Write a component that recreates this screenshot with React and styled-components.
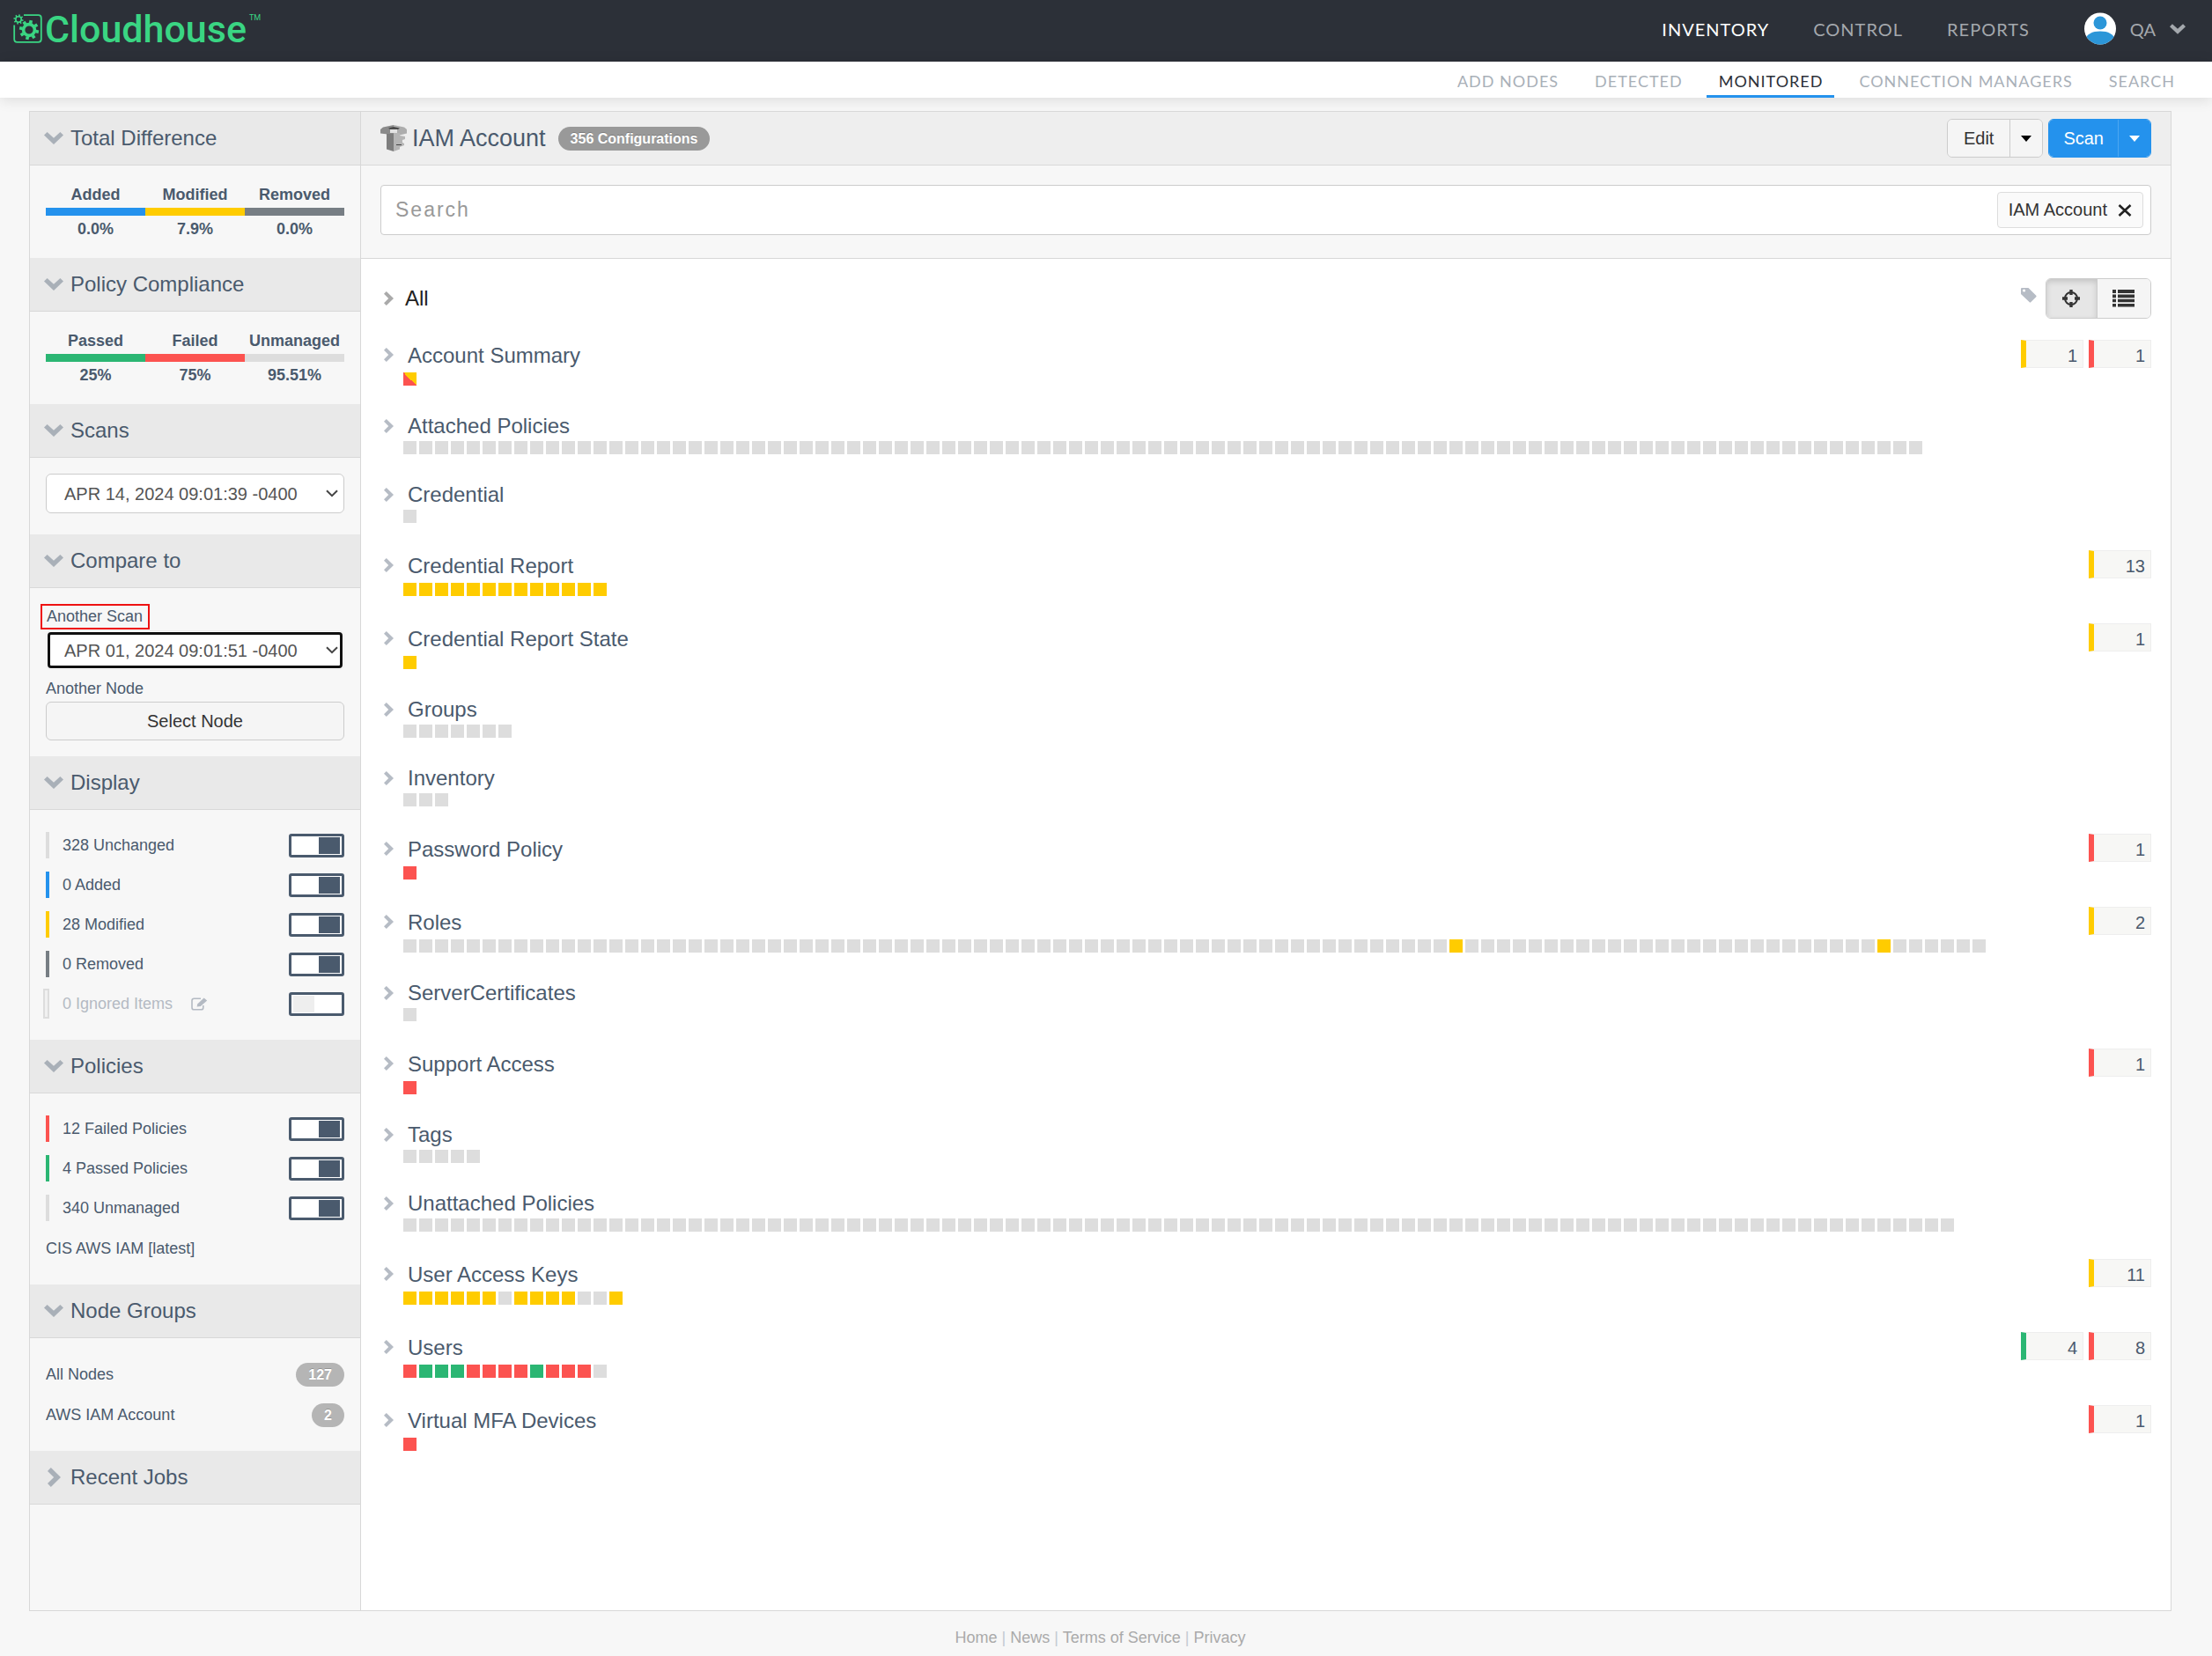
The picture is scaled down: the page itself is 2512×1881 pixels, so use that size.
import React, { useState } from 'react';
import styled, { createGlobalStyle } from 'styled-components';

const colors = {
  none: '#dddddd',
  added: '#2492ed',
  modified: '#ffcc00',
  removed: '#777e84',
  passed: '#2bb673',
  failed: '#fc5350',
  slate: '#4a5a6d',
  border: '#d8d8d8',
};

const fill = (count, kind) => Array(count).fill(kind);

const roles = fill(100, 'none');
roles[66] = 'modified';
roles[93] = 'modified';

const groups = [
  { name: 'Account Summary', items: ['both'], counts: [['modified', 1], ['failed', 1]] },
  { name: 'Attached Policies', items: fill(96, 'none') },
  { name: 'Credential', items: fill(1, 'none') },
  { name: 'Credential Report', items: fill(13, 'modified'), counts: [['modified', 13]] },
  { name: 'Credential Report State', items: fill(1, 'modified'), counts: [['modified', 1]] },
  { name: 'Groups', items: fill(7, 'none') },
  { name: 'Inventory', items: fill(3, 'none') },
  { name: 'Password Policy', items: fill(1, 'failed'), counts: [['failed', 1]] },
  { name: 'Roles', items: roles, counts: [['modified', 2]] },
  { name: 'ServerCertificates', items: fill(1, 'none') },
  { name: 'Support Access', items: fill(1, 'failed'), counts: [['failed', 1]] },
  { name: 'Tags', items: fill(5, 'none') },
  { name: 'Unattached Policies', items: fill(98, 'none') },
  {
    name: 'User Access Keys',
    items: [...fill(6, 'modified'), 'none', ...fill(4, 'modified'), 'none', 'none', 'modified'],
    counts: [['modified', 11]],
  },
  {
    name: 'Users',
    items: ['failed', ...fill(3, 'passed'), ...fill(4, 'failed'), 'passed', ...fill(3, 'failed'), 'none'],
    counts: [['passed', 4], ['failed', 8]],
  },
  { name: 'Virtual MFA Devices', items: fill(1, 'failed'), counts: [['failed', 1]] },
];

const ChevronDown = ({ width = 22, height = 14 }) => (
  <svg width={width} height={height} viewBox='0 0 22 14' fill='currentColor' aria-hidden='true'>
    <path d='M0 3.6 3.6 0 11 6.8 18.4 0 22 3.6 11 14Z' />
  </svg>
);

const ChevronRight = ({ width = 11, height = 16 }) => (
  <svg width={width} height={height} viewBox='0 0 11 16' fill='currentColor' aria-hidden='true'>
    <path d='M0 2.8 2.8 0 11 8 2.8 16 0 13.2 5.2 8Z' />
  </svg>
);

const SelectArrow = () => (
  <svg width='14' height='9' viewBox='0 0 14 9' fill='none' stroke='#444' strokeWidth='2' aria-hidden='true'>
    <path d='M1 1.2 7 7.2 13 1.2' />
  </svg>
);

const Caret = () => (
  <svg width='12' height='7' viewBox='0 0 12 7' fill='currentColor' aria-hidden='true'>
    <path d='M0 0H12L6 7Z' />
  </svg>
);

const CloseIcon = () => (
  <svg width='16' height='14' viewBox='0 0 16 14' fill='none' stroke='#222' strokeWidth='2.6' aria-hidden='true'>
    <path d='M1.5 1 14.5 13M14.5 1 1.5 13' />
  </svg>
);

const TagIcon = () => (
  <svg width='18' height='18' viewBox='0 0 18 18' fill='#b6bcc5' aria-hidden='true'>
    <path fillRule='evenodd' d='M1 1H8.5L17.3 9.8Q18 10.5 17.3 11.2L11.2 17.3Q10.5 18 9.8 17.3L0 8V2Q0 1 1 1ZM3.6 2.4A1.6 1.6 0 1 0 3.6 5.6 1.6 1.6 0 0 0 3.6 2.4Z' />
  </svg>
);

const TargetIcon = () => (
  <svg width='20' height='20' viewBox='0 0 20 20' fill='none' stroke='#333' aria-hidden='true'>
    <circle cx='10' cy='10' r='7' strokeWidth='2' />
    <path d='M10 0V6M10 14V20M0 10H6M14 10H20' strokeWidth='3.4' />
  </svg>
);

const ListIcon = () => (
  <svg width='25' height='20' viewBox='0 0 25 20' fill='#333' aria-hidden='true'>
    <path d='M0 0H4V4H0ZM6 0H25V4H6ZM0 5.5H4V9.2H0ZM6 5.5H25V9.2H6ZM0 10.8H4V14.2H0ZM6 10.8H25V14.2H6ZM0 16H4V19.5H0ZM6 16H25V19.5H6Z' />
  </svg>
);

const EditIcon = () => (
  <svg width='19' height='15' viewBox='0 0 19 15' fill='none' stroke='#b4bac3' aria-hidden='true'>
    <path d='M11 1.3H3.4Q1 1.3 1 3.6V11.4Q1 13.8 3.4 13.8H11.4Q13.8 13.8 13.8 11.4V9' strokeWidth='1.6' />
    <path d='M6.6 10.6 7.4 7.2 14.6 .4 18.2 3.6 10.8 10Z' fill='#b4bac3' stroke='none' />
  </svg>
);

const Avatar = () => (
  <svg width='36' height='37' viewBox='0 0 36 37' aria-hidden='true'>
    <clipPath id='face'><circle cx='18' cy='18.5' r='18' /></clipPath>
    <circle cx='18' cy='18.5' r='18' fill='#fff' />
    <g clipPath='url(#face)' fill='#2c96d8'>
      <ellipse cx='18' cy='12' rx='7.5' ry='7.5' />
      <path d='M1 31Q4 21.5 18 21.5T35 31L33 38H3Z' />
    </g>
  </svg>
);

const teeth = [0, 45, 90, 135, 180, 225, 270, 315];

const Gear = ({ x, y, r, width, tooth }) => (
  <g stroke='#3ad583' fill='none' strokeWidth={width}>
    <circle cx={x} cy={y} r={r} />
    {teeth.map((a) => (
      <path key={a} d={`M${x} ${y - r - width / 2 + 0.5}v${-tooth}`} transform={`rotate(${a + 12} ${x} ${y})`} />
    ))}
  </g>
);

const LogoMark = () => (
  <svg width='33' height='33' viewBox='0 0 33 33' aria-hidden='true'>
    <path d='M12 1.2H28.5Q31.8 1.2 31.8 4.5V28.5Q31.8 31.8 28.5 31.8H4.5Q1.2 31.8 1.2 28.5V12.5' fill='none' stroke='#3ad583' strokeWidth='1.8' />
    <Gear x={6} y={6} r={3.2} width={1.6} tooth={2.1} />
    <Gear x={18} y={18} r={6.4} width={3.6} tooth={3.4} />
  </svg>
);

const AccountIcon = () => (
  <svg width='30' height='30' viewBox='0 0 30 30' aria-hidden='true'>
    <path d='M0 5 3 2.5 15 0V12H8V10.5L0 9.5Z' fill='#8a8a8a' />
    <path d='M15 0 27 2.5 30 5V9.5L22 11.5H15Z' fill='#adadad' />
    <path d='M7 10H15V30L7 27.5Z' fill='#7d7d7d' />
    <path d='M15 9H22V12L28 13V16L25 17V20L27 21V23L22 25V27.5L15 30Z' fill='#b5b5b5' />
    <path d='M9 3.5 15 2 22 3.5 20 5H11Z' fill='#4a4a4a' />
    <path d='M11 5H19V9H11Z' fill='#e2e2e2' />
    <path d='M18 22H24V23H18Z' fill='#444' />
  </svg>
);

const Panel = ({ title, closed, children }) => (
  <section>
    <PanelTitle type='button' aria-expanded={!closed}>
      <span className='icon'>{closed ? <ChevronRight width={15} height={22} /> : <ChevronDown />}</span>
      {title}
    </PanelTitle>
    {children}
  </section>
);

const Stats = ({ data }) => (
  <StatGrid>
    {data.map(([label, value, color]) => (
      <Stat key={label} $color={color}>
        <dt>{label}</dt>
        <dd>{value}</dd>
      </Stat>
    ))}
  </StatGrid>
);

const Filter = ({ label, color, off }) => {
  const [on, setOn] = useState(!off);
  return (
    <FilterRow $off={off}>
      <Marker $color={color} $hollow={off} />
      <span>{label}</span>
      {off && <EditIcon />}
      <Switch type='checkbox' aria-label={label} checked={on} onChange={() => setOn(!on)} />
    </FilterRow>
  );
};

const Group = ({ name, items, counts = [] }) => (
  <GroupRow>
    <GroupHead $tall={counts.length > 0}>
      <GroupName type='button'>
        <ChevronRight />
        {name}
      </GroupName>
      {counts.map(([kind, count]) => (
        <Count key={kind} $color={colors[kind]}>{count}</Count>
      ))}
    </GroupHead>
    <Squares>
      {items.map((kind, i) => <Square key={i} $kind={kind} />)}
    </Squares>
  </GroupRow>
);

const App = () => {
  return (
    <>
      <GlobalStyle />
      <Page>
        <TopBar>
          <Logo href='#'>
            <LogoMark />
            <span>Cloudhouse</span>
            <sup>TM</sup>
          </Logo>
          <MainNav>
            <a href='#' className='active'>INVENTORY</a>
            <a href='#'>CONTROL</a>
            <a href='#'>REPORTS</a>
          </MainNav>
          <UserMenu type='button'>
            <Avatar />
            QA
            <ChevronDown width={18} height={12} />
          </UserMenu>
        </TopBar>
        <SubNav>
          <a href='#'>ADD NODES</a>
          <a href='#'>DETECTED</a>
          <a href='#' className='active'>MONITORED</a>
          <a href='#'>CONNECTION MANAGERS</a>
          <a href='#'>SEARCH</a>
        </SubNav>

        <Container>
          <Sidebar>
            <Panel title='Total Difference'>
              <Stats data={[['Added', '0.0%', colors.added], ['Modified', '7.9%', colors.modified], ['Removed', '0.0%', colors.removed]]} />
            </Panel>
            <Panel title='Policy Compliance'>
              <Stats data={[['Passed', '25%', colors.passed], ['Failed', '75%', colors.failed], ['Unmanaged', '95.51%', colors.none]]} />
            </Panel>
            <Panel title='Scans'>
              <ScanBody>
                <SelectBox>
                  <select aria-label='Scans'>
                    <option>APR 14, 2024 09:01:39 -0400</option>
                  </select>
                  <SelectArrow />
                </SelectBox>
              </ScanBody>
            </Panel>
            <Panel title='Compare to'>
              <CompareBody>
                <MarkedLabel htmlFor='another-scan'>Another Scan</MarkedLabel>
                <SelectBox $focused>
                  <select id='another-scan'>
                    <option>APR 01, 2024 09:01:51 -0400</option>
                  </select>
                  <SelectArrow />
                </SelectBox>
                <NodeLabel htmlFor='another-node'>Another Node</NodeLabel>
                <SelectNode id='another-node' type='button'>Select Node</SelectNode>
              </CompareBody>
            </Panel>
            <Panel title='Display'>
              <List>
                <Filter label='328 Unchanged' color={colors.none} />
                <Filter label='0 Added' color={colors.added} />
                <Filter label='28 Modified' color={colors.modified} />
                <Filter label='0 Removed' color={colors.removed} />
                <Filter label='0 Ignored Items' color={colors.none} off />
              </List>
            </Panel>
            <Panel title='Policies'>
              <List>
                <Filter label='12 Failed Policies' color={colors.failed} />
                <Filter label='4 Passed Policies' color={colors.passed} />
                <Filter label='340 Unmanaged' color={colors.none} />
                <ListLink href='#'>CIS AWS IAM [latest]</ListLink>
              </List>
            </Panel>
            <Panel title='Node Groups'>
              <List>
                <ListLink href='#'>All Nodes <Pill>127</Pill></ListLink>
                <ListLink href='#'>AWS IAM Account <Pill>2</Pill></ListLink>
              </List>
            </Panel>
            <Panel title='Recent Jobs' closed />
          </Sidebar>

          <Main>
            <Header>
              <AccountIcon />
              <h1>IAM Account</h1>
              <Pill $dark>356 Configurations</Pill>
              <ButtonGroup>
                <button type='button'>Edit</button>
                <button type='button' className='caret' aria-label='More edit actions'><Caret /></button>
              </ButtonGroup>
              <ButtonGroup $primary>
                <button type='button'>Scan</button>
                <button type='button' className='caret' aria-label='More scan actions'><Caret /></button>
              </ButtonGroup>
            </Header>
            <SearchZone>
              <SearchBox>
                <input type='text' placeholder='Search' aria-label='Search' />
                <Chip type='button'>IAM Account <CloseIcon /></Chip>
              </SearchBox>
            </SearchZone>
            <Content>
              <Toolbar>
                <AllToggle type='button'><ChevronRight />All</AllToggle>
                <TagIcon />
                <ViewToggle>
                  <button type='button' className='active' aria-label='Map view'><TargetIcon /></button>
                  <button type='button' aria-label='List view'><ListIcon /></button>
                </ViewToggle>
              </Toolbar>
              {groups.map((group) => <Group key={group.name} {...group} />)}
            </Content>
          </Main>
        </Container>

        <Footer>
          <a href='#'>Home</a> | <a href='#'>News</a> | <a href='#'>Terms of Service</a> | <a href='#'>Privacy</a>
        </Footer>
      </Page>
    </>
  );
};

const GlobalStyle = createGlobalStyle`
  *, *::before, *::after {
    box-sizing: border-box;
  }
  body {
    margin: 0;
    background: #f7f7f7;
    color: ${colors.slate};
    font-family: "Liberation Sans", Arial, sans-serif;
    font-size: 18px;
  }
  a {
    color: inherit;
    text-decoration: none;
  }
  button, select, input {
    font-family: inherit;
    color: inherit;
    margin: 0;
  }
  svg {
    display: block;
    flex: none;
  }
`;

const Page = styled.div`
  display: flex;
  flex-direction: column;
  min-height: 100vh;
`;

const TopBar = styled.header`
  display: flex;
  align-items: center;
  height: 70px;
  padding: 0 30px 5px 15px;
  background: #2c3038;
  font-family: Lato, sans-serif;
`;

const Logo = styled.a`
  display: flex;
  align-items: center;
  gap: 3px;
  margin-right: auto;
  color: #3ad583;
  span {
    font: 500 43px/44px Roboto, sans-serif;
  }
  sup {
    align-self: flex-start;
    padding-top: 4px;
    font: 9px/10px Roboto, sans-serif;
  }
`;

const MainNav = styled.nav`
  display: flex;
  gap: 50px;
  margin-right: 62px;
  font-size: 20px;
  letter-spacing: 1px;
  color: #a4a8ad;
  .active {
    color: white;
  }
`;

const UserMenu = styled.button`
  display: flex;
  align-items: center;
  gap: 16px;
  padding: 0;
  border: 0;
  background: none;
  color: #a4a8ad;
  font-size: 20px;
`;

const SubNav = styled.nav`
  display: flex;
  justify-content: flex-end;
  gap: 14px;
  height: 41px;
  padding-right: 29px;
  background: white;
  box-shadow: 0 2px 16px rgba(0, 0, 0, 0.12);
  font-family: Lato, sans-serif;
  font-size: 18px;
  line-height: 44px;
  letter-spacing: 1px;
  color: #a9b0b8;
  a {
    height: 41px;
    padding: 0 13px 0 14px;
  }
  .active {
    color: #2c3038;
    border-bottom: 3px solid ${colors.added};
  }
`;

const Container = styled.div`
  display: flex;
  flex: 1;
  margin: 15px 46px 0 33px;
  border: 1px solid ${colors.border};
  background: white;
`;

const Sidebar = styled.aside`
  flex: none;
  width: 376px;
  border-right: 1px solid ${colors.border};
  background: #f7f7f7;
`;

const PanelTitle = styled.button`
  display: flex;
  align-items: center;
  width: 100%;
  height: 61px;
  padding: 0 16px;
  border: 0;
  border-bottom: 1px solid ${colors.border};
  background: #e9e9e9;
  font-size: 24px;
  .icon {
    display: grid;
    place-items: center;
    width: 22px;
    margin-right: 8px;
    color: #a9b0b8;
  }
`;

const StatGrid = styled.dl`
  display: grid;
  grid-template-columns: repeat(3, 1fr);
  margin: 0;
  padding: 18px;
`;

const Stat = styled.div`
  text-align: center;
  font-weight: 700;
  line-height: 30px;
  dt {
    border-bottom: 9px solid ${({ $color }) => $color};
  }
  dd {
    margin: 0;
  }
`;

const ScanBody = styled.div`
  padding: 18px 18px 24px;
`;

const CompareBody = styled.div`
  display: flex;
  flex-direction: column;
  padding: 18px;
`;

const SelectBox = styled.div`
  display: grid;
  align-items: center;
  select {
    grid-area: 1 / 1;
    appearance: none;
    width: 100%;
    height: 45px;
    padding: 0 20px;
    border: 1px solid ${({ $focused }) => ($focused ? '#eeeeee' : '#cccccc')};
    border-radius: 6px;
    outline: ${({ $focused }) => ($focused ? '3px solid #101010' : '0')};
    outline-offset: -5px;
    background: white;
    color: #555;
    font-size: 20px;
  }
  svg {
    grid-area: 1 / 1;
    justify-self: end;
    margin-right: 7px;
    pointer-events: none;
  }
`;

const MarkedLabel = styled.label`
  align-self: flex-start;
  margin: 0 0 1px -6px;
  padding: 0 6px 0 5px;
  border: 2px solid #ee1111;
  line-height: 25px;
`;

const NodeLabel = styled.label`
  margin: 8px 0 1px;
  line-height: 27px;
`;

const SelectNode = styled.button`
  height: 44px;
  border: 1px solid #cccccc;
  border-radius: 6px;
  background: #f5f5f5;
  color: #333;
  font-size: 20px;
`;

const List = styled.div`
  display: flex;
  flex-direction: column;
  gap: 15px;
  padding: 25px 18px 26px;
`;

const FilterRow = styled.label`
  display: flex;
  align-items: center;
  height: 30px;
  color: ${({ $off }) => ($off ? '#b4bac3' : 'inherit')};
  span + svg {
    margin-left: 21px;
  }
`;

const Marker = styled.i`
  align-self: stretch;
  width: ${({ $hollow }) => ($hollow ? '7px' : '4px')};
  margin: ${({ $hollow }) => ($hollow ? '-2px 15px -2px -3px' : '0 15px 0 0')};
  border: ${({ $hollow }) => ($hollow ? '2px solid #dddddd' : '0')};
  background: ${({ $hollow, $color }) => ($hollow ? '#f1f1f1' : $color)};
`;

const Switch = styled.input`
  appearance: none;
  display: flex;
  align-items: center;
  width: 63px;
  height: 27px;
  margin-left: auto;
  padding: 0 2px;
  border: 3px solid ${colors.slate};
  border-radius: 3px;
  background: white;
  &::before {
    content: '';
    width: 24px;
    height: 19px;
    background: #eeeeee;
  }
  &:checked::before {
    margin-left: auto;
    background: ${colors.slate};
  }
`;

const ListLink = styled.a`
  display: flex;
  align-items: center;
  justify-content: space-between;
  height: 31px;
  padding-top: 2px;
`;

const Pill = styled.span`
  padding: 0 14px;
  border-radius: 14px;
  background: ${({ $dark }) => ($dark ? '#999999' : '#b5b5b5')};
  color: white;
  font-size: 16px;
  font-weight: 700;
  line-height: 27px;
  text-shadow: 0 -1px 0 rgba(0, 0, 0, 0.2);
`;

const Main = styled.main`
  flex: 1;
  min-width: 0;
`;

const Header = styled.div`
  display: flex;
  align-items: center;
  height: 61px;
  padding: 0 22px;
  border-bottom: 1px solid ${colors.border};
  background: #eeeeee;
  h1 {
    margin: 0 14px 0 6px;
    font-size: 27px;
    font-weight: 400;
  }
  ${Pill} {
    margin-right: auto;
  }
`;

const ButtonGroup = styled.div`
  display: flex;
  height: 44px;
  margin-left: 6px;
  border: 1px solid ${({ $primary }) => ($primary ? colors.added : '#cccccc')};
  border-radius: 6px;
  overflow: hidden;
  button {
    padding: 0 ${({ $primary }) => ($primary ? '16px' : '18px')};
    border: 0;
    background: ${({ $primary }) => ($primary ? colors.added : '#f5f5f5')};
    color: ${({ $primary }) => ($primary ? 'white' : '#333')};
    font-size: 20px;
  }
  .caret {
    padding: 0 12px;
    border-left: 1px solid ${({ $primary }) => ($primary ? '#4ba6f1' : '#cccccc')};
    color: ${({ $primary }) => ($primary ? 'white' : 'black')};
  }
`;

const SearchZone = styled.div`
  height: 106px;
  padding: 22px;
  border-bottom: 1px solid ${colors.border};
  background: #f7f7f7;
`;

const SearchBox = styled.div`
  display: flex;
  align-items: center;
  height: 57px;
  padding: 0 8px 0 0;
  border: 1px solid #cccccc;
  border-radius: 4px;
  background: white;
  input {
    flex: 1;
    height: 100%;
    padding: 0 16px;
    border: 0;
    outline: 0;
    background: none;
    font-size: 23px;
    letter-spacing: 2px;
  }
  input::placeholder {
    color: #999;
  }
`;

const Chip = styled.button`
  display: flex;
  align-items: center;
  gap: 12px;
  height: 41px;
  padding: 0 12px;
  border: 1px solid #dddddd;
  border-radius: 4px;
  background: #fafafa;
  color: #333;
  font-size: 20px;
`;

const Content = styled.div`
  padding: 22px 22px 0;
`;

const Toolbar = styled.div`
  display: flex;
  align-items: center;
  margin-bottom: 24px;
  & > svg {
    margin: 0 10px 8px 0;
  }
`;

const AllToggle = styled.button`
  display: flex;
  align-items: center;
  gap: 13px;
  margin-right: auto;
  padding: 0 4px;
  border: 0;
  background: none;
  color: #222;
  font-size: 24px;
  svg {
    color: #aaa;
  }
`;

const ViewToggle = styled.div`
  display: flex;
  height: 46px;
  border: 1px solid #cccccc;
  border-radius: 6px;
  overflow: hidden;
  button {
    width: 60px;
    padding: 0 17px;
    border: 0;
    background: #f5f5f5;
  }
  .active {
    width: 58px;
    padding: 0 18px;
    border-right: 1px solid #cccccc;
    background: #e6e6e6;
    box-shadow: inset 0 3px 6px rgba(0, 0, 0, 0.15);
  }
`;

const GroupRow = styled.div`
  margin-bottom: 31px;
`;

const GroupHead = styled.div`
  display: flex;
  align-items: center;
  gap: 6px;
  height: ${({ $tall }) => ($tall ? '32px' : '27px')};
  margin-bottom: 5px;
`;

const GroupName = styled.button`
  display: flex;
  align-items: center;
  gap: 16px;
  margin-right: auto;
  padding: 2px 4px 0;
  border: 0;
  background: none;
  font-size: 24px;
  line-height: 27px;
  svg {
    color: #b6bcc5;
  }
`;

const Count = styled.span`
  width: 71px;
  height: 32px;
  padding-right: 6px;
  border: 1px solid #eeeeee;
  border-left: 6px solid ${({ $color }) => $color};
  background: #f7f7f5;
  font-size: 20px;
  line-height: 34px;
  text-align: right;
`;

const Squares = styled.div`
  display: flex;
  flex-wrap: wrap;
  gap: 3px;
  margin-left: 26px;
`;

const Square = styled.i`
  width: 15px;
  height: 15px;
  background: ${({ $kind }) =>
    $kind === 'both'
      ? `linear-gradient(45deg, ${colors.failed} 50%, ${colors.modified} 50%)`
      : colors[$kind]};
`;

const Footer = styled.footer`
  height: 51px;
  margin: 0 46px 0 33px;
  padding-top: 9px;
  color: #c4cad2;
  text-align: center;
  line-height: 42px;
  a {
    color: #aaa;
  }
`;

export default App;
